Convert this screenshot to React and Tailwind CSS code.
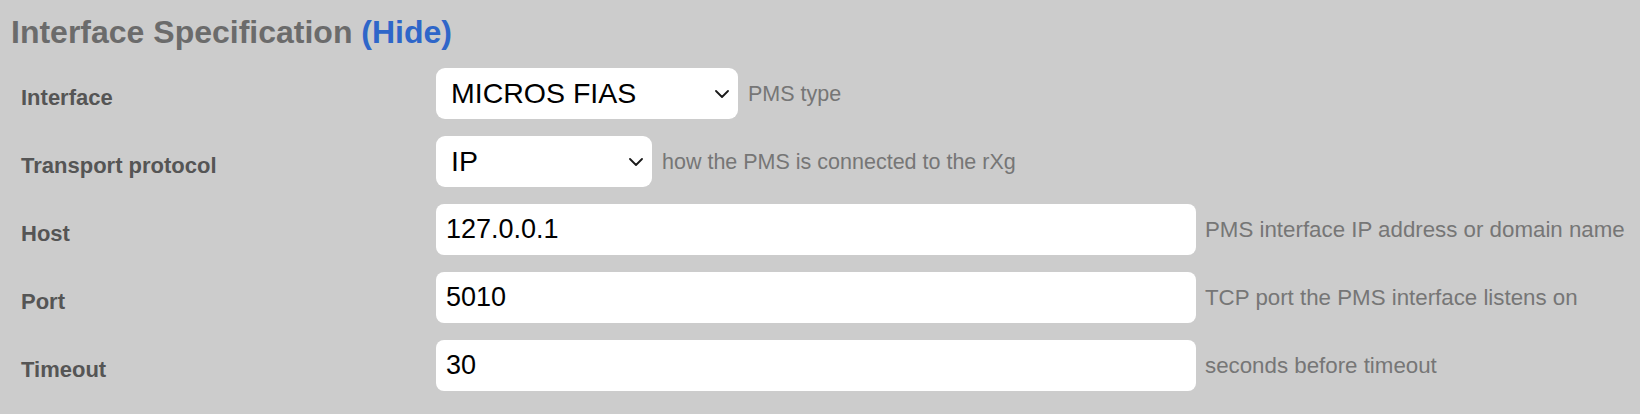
import React from "react";

const Chevron = () => (
  <svg width="14" height="8" viewBox="0 0 14 8" className="shrink-0">
    <path d="M1 1 L7 7 L13 1" fill="none" stroke="#1a1a1a" strokeWidth="1.8" strokeLinecap="round" strokeLinejoin="round" />
  </svg>
);

const Label = ({ children }) => (
  <div className="w-[415px] shrink-0 pt-[8px] text-[22px] leading-[24px] font-bold text-[#555555]">
    {children}
  </div>
);

const Hint = ({ children, big }) => (
  <div
    className={
      big
        ? "ml-[9px] text-[22.3px] leading-[24px] text-[#767676] whitespace-nowrap"
        : "ml-[10px] text-[21.5px] leading-[24px] text-[#767676] whitespace-nowrap"
    }
  >
    {children}
  </div>
);

const Select = ({ value, width }) => (
  <div
    className={`flex h-[51px] ${width} shrink-0 items-center justify-between rounded-[9px] bg-white pl-[15px] pr-[9px] text-[28.5px] text-black`}
  >
    <span className="leading-none">{value}</span>
    <Chevron />
  </div>
);

const Input = ({ value }) => (
  <div className="flex h-[51px] w-[760px] shrink-0 items-center rounded-[8px] bg-white pl-[10px] text-[27px] text-black">
    <span className="leading-none">{value}</span>
  </div>
);

export default function App() {
  return (
    <div
      className="min-h-[414px] w-[1640px] bg-[#cccccc] pt-[16px]"
      style={{ fontFamily: '"Liberation Sans", Arial, sans-serif' }}
    >
      <div className="pl-[11px] text-[32px] leading-[32px] font-bold text-[#6b6b6b]">
        Interface Specification <span className="text-[#2e66c9]">(Hide)</span>
      </div>
      <div className="mt-[20px] flex flex-col gap-[17px] pl-[21px]">
        <div className="flex items-center">
          <Label>Interface</Label>
          <Select value="MICROS FIAS" width="w-[302px]" />
          <Hint>PMS type</Hint>
        </div>
        <div className="flex items-center">
          <Label>Transport protocol</Label>
          <Select value="IP" width="w-[216px]" />
          <Hint>how the PMS is connected to the rXg</Hint>
        </div>
        <div className="flex items-center">
          <Label>Host</Label>
          <Input value="127.0.0.1" />
          <Hint big>PMS interface IP address or domain name</Hint>
        </div>
        <div className="flex items-center">
          <Label>Port</Label>
          <Input value="5010" />
          <Hint big>TCP port the PMS interface listens on</Hint>
        </div>
        <div className="flex items-center">
          <Label>Timeout</Label>
          <Input value="30" />
          <Hint big>seconds before timeout</Hint>
        </div>
      </div>
    </div>
  );
}
